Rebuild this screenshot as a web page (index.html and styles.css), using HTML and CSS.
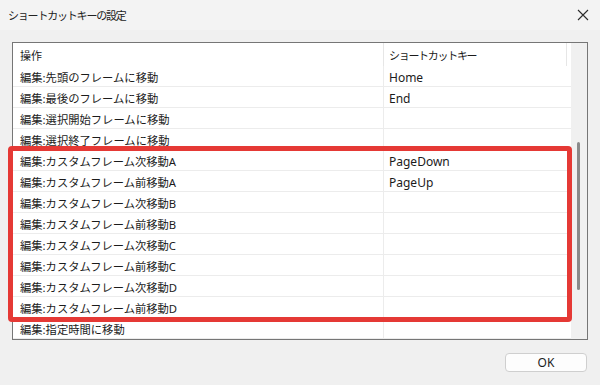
FILE: index.html
```html
<!DOCTYPE html>
<html>
<head>
    <title>ショートカットキーの設定</title>
    <link rel="stylesheet" href="styles.css">
</head>
<body>
    <div class="dialog">
        <div class="titlebar">
            <span class="title">ショートカットキーの設定</span>
            <svg class="close" width="12" height="12" viewBox="0 0 12 12">
                <path d="M1 1 L11 11 M11 1 L1 11" stroke="#2b2b2b" stroke-width="1.1" fill="none"/>
            </svg>
        </div>

        <div class="content">
            <div class="listbox">
                <div class="table">
                    <div class="header">
                        <div class="hcell op">操作</div>
                        <div class="hcell key">ショートカットキー</div>
                    </div>
                    <div class="row"><div class="cell op">編集:先頭のフレームに移動</div><div class="cell key">Home</div></div>
                    <div class="row"><div class="cell op">編集:最後のフレームに移動</div><div class="cell key">End</div></div>
                    <div class="row"><div class="cell op">編集:選択開始フレームに移動</div><div class="cell key"></div></div>
                    <div class="row"><div class="cell op">編集:選択終了フレームに移動</div><div class="cell key"></div></div>
                    <div class="row"><div class="cell op">編集:カスタムフレーム次移動A</div><div class="cell key">PageDown</div></div>
                    <div class="row"><div class="cell op">編集:カスタムフレーム前移動A</div><div class="cell key">PageUp</div></div>
                    <div class="row"><div class="cell op">編集:カスタムフレーム次移動B</div><div class="cell key"></div></div>
                    <div class="row"><div class="cell op">編集:カスタムフレーム前移動B</div><div class="cell key"></div></div>
                    <div class="row"><div class="cell op">編集:カスタムフレーム次移動C</div><div class="cell key"></div></div>
                    <div class="row"><div class="cell op">編集:カスタムフレーム前移動C</div><div class="cell key"></div></div>
                    <div class="row"><div class="cell op">編集:カスタムフレーム次移動D</div><div class="cell key"></div></div>
                    <div class="row"><div class="cell op">編集:カスタムフレーム前移動D</div><div class="cell key"></div></div>
                    <div class="row"><div class="cell op">編集:指定時間に移動</div><div class="cell key"></div></div>
                </div>
                <div class="scrollbar">
                    <div class="thumb"></div>
                </div>
                <!-- highlight over the custom frame rows -->
                <div class="highlight"></div>
            </div>

            <div class="footer">
                <button class="ok">OK</button>
            </div>
        </div>
    </div>
</body>
</html>
```

FILE: styles.css
```css
body {
    margin: 0;
    background: #f0f0f0;
    font-family: "Noto Sans", "Noto Sans CJK JP", sans-serif;
    color: #1b1b1b;
}

.dialog {
    width: 600px;
    height: 385px;
    display: flex;
    flex-direction: column;
}

/* Title bar */
.titlebar {
    height: 30px;
    display: flex;
    align-items: center;
    justify-content: space-between;
    padding: 0 11px 0 8px;
    background: #f3f3f3;
}

.title {
    font-size: 11px;
    letter-spacing: -1.2px;
    color: #222;
}

.close {
    display: block;
}

.content {
    padding: 12px 12px 0 12px;
}

/* List with header and rows */
.listbox {
    position: relative;
    height: 296px;
    border: 1px solid #767676;
    background: #fff;
    display: flex;
}

.table {
    flex: 1;
    overflow: hidden;
}

.header {
    display: grid;
    grid-template-columns: 371px 183px;
    height: 23px;
}

.hcell {
    font-size: 11px;
    line-height: 21px;
    padding-top: 2px;
    padding-left: 7px;
    border-right: 1px solid #e6e6e6;
}

.hcell.key {
    padding-left: 5px;
    letter-spacing: -1.3px;
}

.row {
    display: grid;
    grid-template-columns: 371px 1fr;
    height: 21px;
    box-sizing: border-box;
    border-bottom: 1px solid #ececec;
}

.cell {
    font-size: 11.3px;
    line-height: 19px;
    padding-top: 2px;
    white-space: nowrap;
}

.cell.op {
    padding-left: 7px;
    border-right: 1px solid #ececec;
}

.cell.key {
    padding-left: 5px;
    font-size: 12px;
}

/* Scrollbar */
.scrollbar {
    width: 16px;
    background: #f0f0f0;
    padding-top: 99px;
    box-sizing: border-box;
}

.thumb {
    width: 3px;
    height: 148px;
    margin-left: 6px;
    border-radius: 2px;
    background: #8a8a8a;
}

.highlight {
    position: absolute;
    left: -5px;
    top: 103px;
    width: 554px;
    height: 166px;
    border: 5px solid #e53935;
    border-radius: 4px;
}

/* Footer */
.footer {
    display: flex;
    justify-content: flex-end;
    padding: 13px 1px 0 0;
}

.ok {
    width: 82px;
    height: 19px;
    padding: 0;
    border: 1px solid #cfcfcf;
    border-radius: 4px;
    background: #fdfdfd;
    font-family: "Noto Sans", sans-serif;
    font-size: 12px;
    line-height: 17px;
    color: #1b1b1b;
}
```
